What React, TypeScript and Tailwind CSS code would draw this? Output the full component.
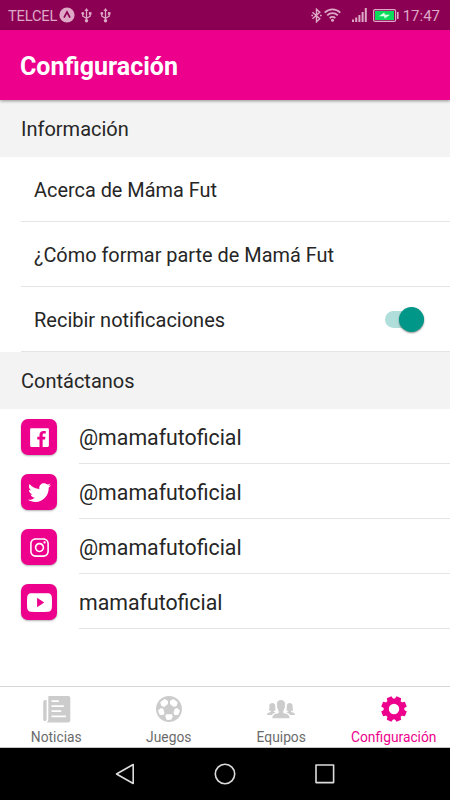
import React, { useState } from 'react';
import {
  IoLogoFacebook,
  IoLogoTwitter,
  IoLogoInstagram,
  IoLogoYoutube,
  IoMdFootball,
  IoIosPeople,
} from 'react-icons/io';

const OPTIONS = ['Acerca de Máma Fut', '¿Cómo formar parte de Mamá Fut'];

const CONTACTS = [
  { id: 'facebook', label: '@mamafutoficial', Icon: IoLogoFacebook },
  { id: 'twitter', label: '@mamafutoficial', Icon: IoLogoTwitter },
  { id: 'instagram', label: '@mamafutoficial', Icon: IoLogoInstagram },
  { id: 'youtube', label: 'mamafutoficial', Icon: IoLogoYoutube },
];

const Paper = ({ size }: { size: number }) => (
  <svg width={size} height={size} viewBox="0 0 32 32" fill="currentColor">
    <path
      fillRule="evenodd"
      d="M8.9 3h19.6a1.8 1.8 0 0 1 1.8 1.8v22.4a2.2 2.2 0 0 1-2.2 2.2H6.6c1.2-.6 1.7-1.5 1.7-2.8V3.6zM11.5 7.3v1.7h7.4V7.3zM11.5 12.3v1.7h12.3v-1.7zM11.5 17.3v1.7h9.8v-1.7zM11.5 22.5v1.7h14.5v-1.7z"
    />
    <path d="M6.6 7.1H5.4A2.2 2.2 0 0 0 3.2 9.3v17.3a1.7 1.7 0 0 0 3.4 0z" />
  </svg>
);

// eight teeth, turned so that a gap points up
const Gear = ({ size }: { size: number }) => (
  <svg width={size} height={size} viewBox="-16 -16 32 32" fill="currentColor">
    <circle r="7.8" fill="none" stroke="currentColor" strokeWidth="5.2" />
    {[22.5, 67.5, 112.5, 157.5, 202.5, 247.5, 292.5, 337.5].map((angle) => (
      <path key={angle} transform={`rotate(${angle})`} d="M-3.2-9.4-2.5-12.8h5L3.2-9.4z" />
    ))}
  </svg>
);

const TABS = [
  { label: 'Noticias', Icon: Paper, size: 32 },
  { label: 'Juegos', Icon: IoMdFootball, size: 32 },
  { label: 'Equipos', Icon: IoIosPeople, size: 32 },
  { label: 'Configuración', Icon: Gear, size: 32 },
];

const Usb = () => (
  <svg width="11" height="15" viewBox="0 0 11 15" fill="none" stroke="currentColor" strokeWidth="1.3">
    <path d="M5.5 2v11M1.8 5v3.2l3.7 2 3.7-2V5" />
    <path d="M5.5 0 3.4 3h4.2z" fill="currentColor" stroke="none" />
    <circle cx="1.8" cy="5.4" r="1.4" fill="currentColor" stroke="none" />
    <rect x="7.9" y="4.1" width="2.6" height="2.6" fill="currentColor" stroke="none" />
    <circle cx="5.5" cy="12.8" r="1.7" fill="currentColor" stroke="none" />
  </svg>
);

const StatusBar = () => (
  <div className="flex h-[30px] shrink-0 items-center bg-[#8c0053] pl-2 pr-[10px] text-[#dda9c6]">
    <span className="w-[51px] pt-[2px] text-[14.7px] tracking-[-0.2px]">TELCEL</span>
    <svg width="16" height="16" viewBox="0 0 16 16">
      <circle cx="8" cy="8" r="7.6" fill="currentColor" />
      <path d="M5 10.7 8 5l3 5.7" fill="none" stroke="#8c0053" strokeWidth="1.7" />
    </svg>
    <div className="ml-[6px] flex gap-2">
      <Usb />
      <Usb />
    </div>
    <div className="ml-auto flex items-center">
      <svg width="11" height="15" viewBox="0 0 11 16" fill="none" stroke="currentColor" strokeWidth="1.5">
        <path d="M1.2 4.5 9 11.5 5.5 14.7V1.3L9 4.5 1.2 11.5" />
        <path d="M0 8h1.8M9.2 8H11" />
      </svg>
      <svg className="ml-[2px]" width="17" height="14" viewBox="0 0 17 14" fill="none" stroke="currentColor" strokeWidth="1.8">
        <path d="M.7 4.6a11 11 0 0 1 15.6 0M3.2 7.4a7.5 7.5 0 0 1 10.6 0M5.7 10.1a4 4 0 0 1 5.6 0" />
        <circle cx="8.5" cy="12.3" r="1.5" fill="currentColor" stroke="none" />
      </svg>
      <svg className="ml-[11px]" width="15" height="14" viewBox="0 0 15 14" fill="currentColor">
        <path d="M0 11.4h2V14H0zM3.2 9.5h2V14h-2zM6.4 7h2v7h-2zM9.6 4h2v10h-2zM12.8 0h2v14h-2z" />
      </svg>
      <svg className="ml-[6px]" width="26" height="13" viewBox="0 0 26 13">
        <rect x=".6" y=".6" width="22" height="11.8" rx="1.5" fill="none" stroke="currentColor" strokeWidth="1.2" />
        <rect x="2" y="2" width="19" height="9" fill="#0bdc5c" />
        <rect x="24" y="3" width="1.6" height="7" fill="currentColor" />
        <path d="m6 7.2 5.2-3.6.8 2.1 5 .1-5.2 3.6-.8-2.1z" fill="#d9ffe6" />
      </svg>
      <span className="ml-[4px] pt-[2px] text-[15px]">17:47</span>
    </div>
  </div>
);

const SectionTitle = ({ children }: { children: React.ReactNode }) => (
  <div className="flex h-[57px] items-center bg-[#f3f3f3] pl-[21px] pt-[1px] text-[20px]">{children}</div>
);

const NavBar = () => (
  <div className="flex h-[52px] shrink-0 items-center justify-center bg-black">
    <svg width="220" height="24" viewBox="0 0 220 24" fill="none" stroke="#dcdcdc" strokeWidth="1.6" strokeLinejoin="round">
      <path d="M18.2 2.5v19L1.5 12z" />
      <circle cx="110" cy="12" r="9.7" />
      <rect x="201" y="3" width="17.6" height="17.6" />
    </svg>
  </div>
);

export default function App() {
  const [notify, setNotify] = useState(true);
  const [tab, setTab] = useState('Configuración');

  return (
    <div className="flex h-[800px] w-[450px] flex-col overflow-hidden bg-white font-['Roboto',sans-serif] text-[#262626]">
      <StatusBar />
      <header className="relative flex h-[70px] shrink-0 items-center bg-[#ec008c] pl-5 pt-[3px] shadow-[0_1px_3px_rgba(0,0,0,0.4)]">
        <h1 className="text-[25px] font-bold text-white">Configuración</h1>
      </header>

      <main className="flex-1">
        <SectionTitle>Información</SectionTitle>
        {OPTIONS.map((option) => (
          <div key={option} className="ml-[21px] flex h-[65px] items-center border-b border-[#e4e4e4] pl-[13px] pt-[3px] text-[19.9px]">
            {option}
          </div>
        ))}
        <div className="ml-[21px] flex h-[65px] items-center justify-between border-b border-[#e4e4e4] pl-[13px] pr-[26px] text-[20px]">
          <span className="pt-[2px]">Recibir notificaciones</span>
          <button
            role="switch"
            aria-checked={notify}
            onClick={() => setNotify(!notify)}
            className={`flex h-[17px] w-[39px] items-center rounded-full bg-[#b0dfdb] ${notify ? 'justify-end' : 'justify-start'}`}
          >
            <span className="size-[25px] shrink-0 rounded-full bg-[#009688] shadow-[0_1px_2px_rgba(0,0,0,0.45)]" />
          </button>
        </div>

        <SectionTitle>Contáctanos</SectionTitle>
        {CONTACTS.map(({ id, label, Icon }) => (
          <div key={id} className="flex h-[55px] pl-[21px]">
            <div className="mt-[10px] flex size-9 items-center justify-center rounded-[7px] bg-[#ec008c] text-white shadow-[0_1px_2px_rgba(0,0,0,0.3)]">
              <Icon size={25} />
            </div>
            <div className="ml-[22px] flex flex-1 items-center border-b border-[#e4e4e4] pt-[4px] text-[21.3px]">{label}</div>
          </div>
        ))}
      </main>

      <nav className="flex h-[62px] shrink-0 border-y border-t-[#d6d6d6] border-b-[#c4c4c4]">
        {TABS.map(({ label, Icon, size }) => (
          <button
            key={label}
            onClick={() => setTab(label)}
            className={`flex flex-1 flex-col items-center ${tab === label ? 'text-[#ec008c]' : 'text-[#6b6b6b]'}`}
          >
            <span className={`mt-[4px] flex h-9 items-center ${tab === label ? '' : 'text-[#cccccc]'}`}>
              <Icon size={size} />
            </span>
            <span className="text-[13.8px] leading-5">{label}</span>
          </button>
        ))}
      </nav>
      <NavBar />
    </div>
  );
}
